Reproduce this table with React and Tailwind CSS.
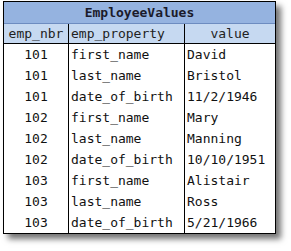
export default function App() {
  const rows = [
    ["101", "first_name", "David"],
    ["101", "last_name", "Bristol"],
    ["101", "date_of_birth", "11/2/1946"],
    ["102", "first_name", "Mary"],
    ["102", "last_name", "Manning"],
    ["102", "date_of_birth", "10/10/1951"],
    ["103", "first_name", "Alistair"],
    ["103", "last_name", "Ross"],
    ["103", "date_of_birth", "5/21/1966"],
  ];
  return (
    <div className="w-[291px] h-[251px] bg-white pt-[1px] pl-[3px]">
      <div
        className="w-[273px] border border-black bg-white text-[13px] leading-none text-[#111] shadow-[5px_5px_6px_rgba(0,0,0,0.55)]"
        style={{ fontFamily: '"DejaVu Sans Mono", monospace' }}
      >
        <div className="h-[22px] bg-[#95b3e0] border-b border-[#6d8cc0] flex items-center justify-center font-bold text-[#1b1b2b]">
          EmployeeValues
        </div>
        <div className="grid grid-cols-[65px_116px_1fr] h-[20px] bg-[#c6d9f1] border-b border-black text-[#222]">
          <div className="border-r border-black flex items-center justify-center">emp_nbr</div>
          <div className="border-r border-black flex items-center pl-[2px]">emp_property</div>
          <div className="flex items-center justify-center">value</div>
        </div>
        {rows.map((r, i) => (
          <div key={i} className="grid grid-cols-[65px_116px_1fr] h-[21px]">
            <div className="border-r border-black flex items-center justify-center">{r[0]}</div>
            <div className="border-r border-black flex items-center pl-[2px]">{r[1]}</div>
            <div className="flex items-center pl-[2px]">{r[2]}</div>
          </div>
        ))}
      </div>
    </div>
  );
}
